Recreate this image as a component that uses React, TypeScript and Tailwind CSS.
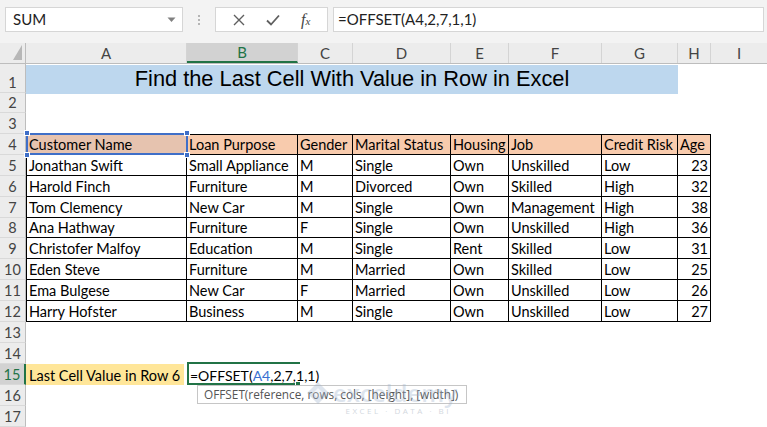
import React from "react";

const colW = ["w-[161px]", "w-[111px]", "w-[55px]", "w-[98px]", "w-[58px]", "w-[93px]", "w-[76px]", "w-[33px]"];
const letters = ["A", "B", "C", "D", "E", "F", "G", "H"];
const rowH = ["h-[29px]", "h-[20px]", "h-[21px]", "h-[21px]", "h-[21px]", "h-[21px]", "h-[21px]", "h-[20px]", "h-[21px]", "h-[21px]", "h-[21px]", "h-[21px]", "h-[21px]", "h-[21px]", "h-[21px]", "h-[21px]", "h-[21px]"];

const header = ["Customer Name", "Loan Purpose", "Gender", "Marital Status", "Housing", "Job", "Credit Risk", "Age"];
const data: string[][] = [
  ["Jonathan Swift", "Small Appliance", "M", "Single", "Own", "Unskilled", "Low", "23"],
  ["Harold Finch", "Furniture", "M", "Divorced", "Own", "Skilled", "High", "32"],
  ["Tom Clemency", "New Car", "M", "Single", "Own", "Management", "High", "38"],
  ["Ana Hathway", "Furniture", "F", "Single", "Own", "Unskilled", "High", "36"],
  ["Christofer Malfoy", "Education", "M", "Single", "Rent", "Skilled", "Low", "31"],
  ["Eden Steve", "Furniture", "M", "Married", "Own", "Skilled", "Low", "25"],
  ["Ema Bulgese", "New Car", "F", "Married", "Own", "Unskilled", "Low", "26"],
  ["Harry Hofster", "Business", "M", "Single", "Own", "Unskilled", "Low", "27"],
];

function RowHead({ n, selected }: { n: number; selected?: boolean }) {
  return (
    <div
      className={
        "w-[26px] shrink-0 h-full flex items-end justify-center leading-[19px] text-[14.5px] border-b border-[#d9d9d9] " +
        (selected
          ? "bg-[#d2d2d2] text-[#217346] border-r-2 border-r-[#217346]"
          : "bg-[#ececec] text-[#444] border-r border-r-[#bdbdbd]")
      }
    >
      {n}
    </div>
  );
}

function TableRow({ cells, isHead }: { cells: string[]; isHead?: boolean }) {
  return (
    <>
      {cells.map((c, i) => {
        const last = i === 7;
        return (
          <div
            key={i}
            className={
              colW[i] +
              " shrink-0 h-full flex items-end leading-[19px] px-[2px] whitespace-nowrap border-b border-r border-black " +
              (i === 0 ? "border-l " : "") +
              (isHead ? "border-t " : "") +
              (isHead ? (i === 0 ? "bg-[#e6c3af] " : "bg-[#f8cbad] ") : "") +
              (last && !isHead ? "justify-end " : "")
            }
          >
            {c}
          </div>
        );
      })}
    </>
  );
}

export default function App() {
  return (
    <div className="relative w-[767px] h-[427px] overflow-hidden bg-white font-['Lato',sans-serif] text-[14.5px] text-black">
      {/* Formula bar */}
      <div className="h-[43px] bg-[#f3f3f3] flex items-start pt-[7px] pl-[5px]">
        <div className="w-[178px] h-[25px] bg-white border border-[#d6d6d6] flex items-center justify-between pl-[7px] pr-[6px] text-[15px] text-[#222]">
          <span>SUM</span>
          <svg width="9" height="6" viewBox="0 0 9 6">
            <path d="M0.5 0.5 L8.5 0.5 L4.5 5 Z" fill="#808080" />
          </svg>
        </div>
        <div className="w-[32px] h-[25px] flex flex-col items-center justify-center gap-[2px]">
          <span className="w-[2px] h-[2px] bg-[#b5b5b5]" />
          <span className="w-[2px] h-[2px] bg-[#b5b5b5]" />
          <span className="w-[2px] h-[2px] bg-[#b5b5b5]" />
        </div>
        <div className="w-[113px] h-[25px] bg-white border border-[#d6d6d6] flex items-center justify-around px-[6px]">
          <svg width="12" height="12" viewBox="0 0 12 12">
            <path d="M1 1 L11 11 M11 1 L1 11" stroke="#5f5f5f" strokeWidth="1.4" />
          </svg>
          <svg width="14" height="12" viewBox="0 0 14 12">
            <path d="M1 6.5 L5 10.5 L13 1.5" stroke="#5f5f5f" strokeWidth="1.8" fill="none" />
          </svg>
          <span className="font-['Liberation_Serif',serif] italic text-[16px] text-[#444] leading-none">
            f<span className="text-[11px]">x</span>
          </span>
        </div>
        <div className="ml-[5px] w-[431px] h-[25px] bg-white border border-[#d6d6d6] flex items-center pl-[4px] text-[15px] text-[#222]">
          =OFFSET(A4,2,7,1,1)
        </div>
      </div>

      {/* Column headers */}
      <div className="h-[21px] flex bg-[#ececec] border-b border-[#bdbdbd]">
        <div className="w-[26px] shrink-0 h-full border-r border-[#bdbdbd] relative">
          <svg className="absolute right-[3px] bottom-[3px]" width="9" height="15" viewBox="0 0 9 15">
            <path d="M9 0 L9 15 L0 15 Z" fill="#b7b7b7" />
          </svg>
        </div>
        {letters.map((l, i) => (
          <div
            key={l}
            className={
              colW[i] +
              " shrink-0 h-full flex items-center justify-center text-[15px] border-r border-[#d4d4d4] " +
              (l === "B" ? "bg-[#d2d2d2] text-[#217346] border-b-2 border-b-[#217346]" : "text-[#444]")
            }
          >
            {l}
          </div>
        ))}
        <div className="flex-1 h-full flex items-center justify-center text-[15px] text-[#444]">I</div>
      </div>

      {/* Rows */}
      {rowH.map((h, idx) => {
        const n = idx + 1;
        return (
          <div key={n} className={h + " flex"}>
            <RowHead n={n} selected={n === 15} />
            {n === 1 && (
              <div className="w-[652px] shrink-0 h-full bg-[#bdd7ee] flex items-center justify-center font-['Liberation_Sans',sans-serif] text-[21.8px] mt-[1px]">
                Find the Last Cell With Value in Row in Excel
              </div>
            )}
            {n === 4 && <TableRow cells={header} isHead />}
            {n >= 5 && n <= 12 && <TableRow cells={data[n - 5]} />}
            {n === 15 && (
              <>
                <div className="w-[158px] shrink-0 h-full bg-[#ffe699] flex items-end leading-[19px] px-[3px] whitespace-nowrap">
                  Last Cell Value in Row 6
                </div>
                <div className="w-[3px] shrink-0" />
                <div className="flex items-end leading-[19px] pl-[3px] whitespace-nowrap text-[14px]">
                  =OFFSET(<span className="text-[#3a6fd0]">A4</span>,2,7,1,1)
                </div>
              </>
            )}
          </div>
        );
      })}

      {/* A4 reference highlight */}
      <div className="absolute left-[26px] top-[133px] w-[162px] h-[22px] border-2 border-[#3f6fc8]" />
      <div className="absolute left-[24px] top-[130px] w-[6px] h-[6px] bg-[#3f6fc8] border border-white" />
      <div className="absolute left-[184px] top-[130px] w-[6px] h-[6px] bg-[#3f6fc8] border border-white" />
      <div className="absolute left-[24px] top-[152px] w-[6px] h-[6px] bg-[#3f6fc8] border border-white" />
      <div className="absolute left-[184px] top-[152px] w-[6px] h-[6px] bg-[#3f6fc8] border border-white" />

      {/* Active cell B15 */}
      <div className="absolute left-[187px] top-[362px] w-[113px] h-[23px] border-2 border-r-0 border-[#217346]" />
      <div className="absolute left-[295px] top-[381px] w-[6px] h-[6px] bg-[#217346] border border-white" />

      {/* Tooltip */}
      <div className="absolute left-[197px] top-[385px] w-[270px] h-[19px] bg-white border border-[#c6c6c6] flex items-center pl-[6px] font-['Open_Sans',sans-serif] text-[11.8px] text-[#555] whitespace-nowrap">
        OFFSET(reference, rows, cols, [height], [width])
      </div>

      {/* Watermark */}
      <div className="absolute left-[306px] top-[381px] flex flex-col items-end opacity-35 pointer-events-none">
        <div className="flex items-center gap-[3px]">
          <svg width="24" height="24" viewBox="0 0 24 24">
            <path d="M12 1 L23 12 L12 23 L1 12 Z" fill="#9fb3cc" />
            <path d="M12 7 L17 12 L12 17 L7 12 Z" fill="#dbe4ef" />
          </svg>
          <span className="font-['Open_Sans',sans-serif] font-semibold text-[24px] text-[#9fb3cc] leading-none">exceldemy</span>
        </div>
        <span className="font-['Open_Sans',sans-serif] text-[8px] tracking-[2.5px] text-[#7f8fa3] leading-none mt-[2px] mr-[6px]">EXCEL · DATA · BI</span>
      </div>
    </div>
  );
}
